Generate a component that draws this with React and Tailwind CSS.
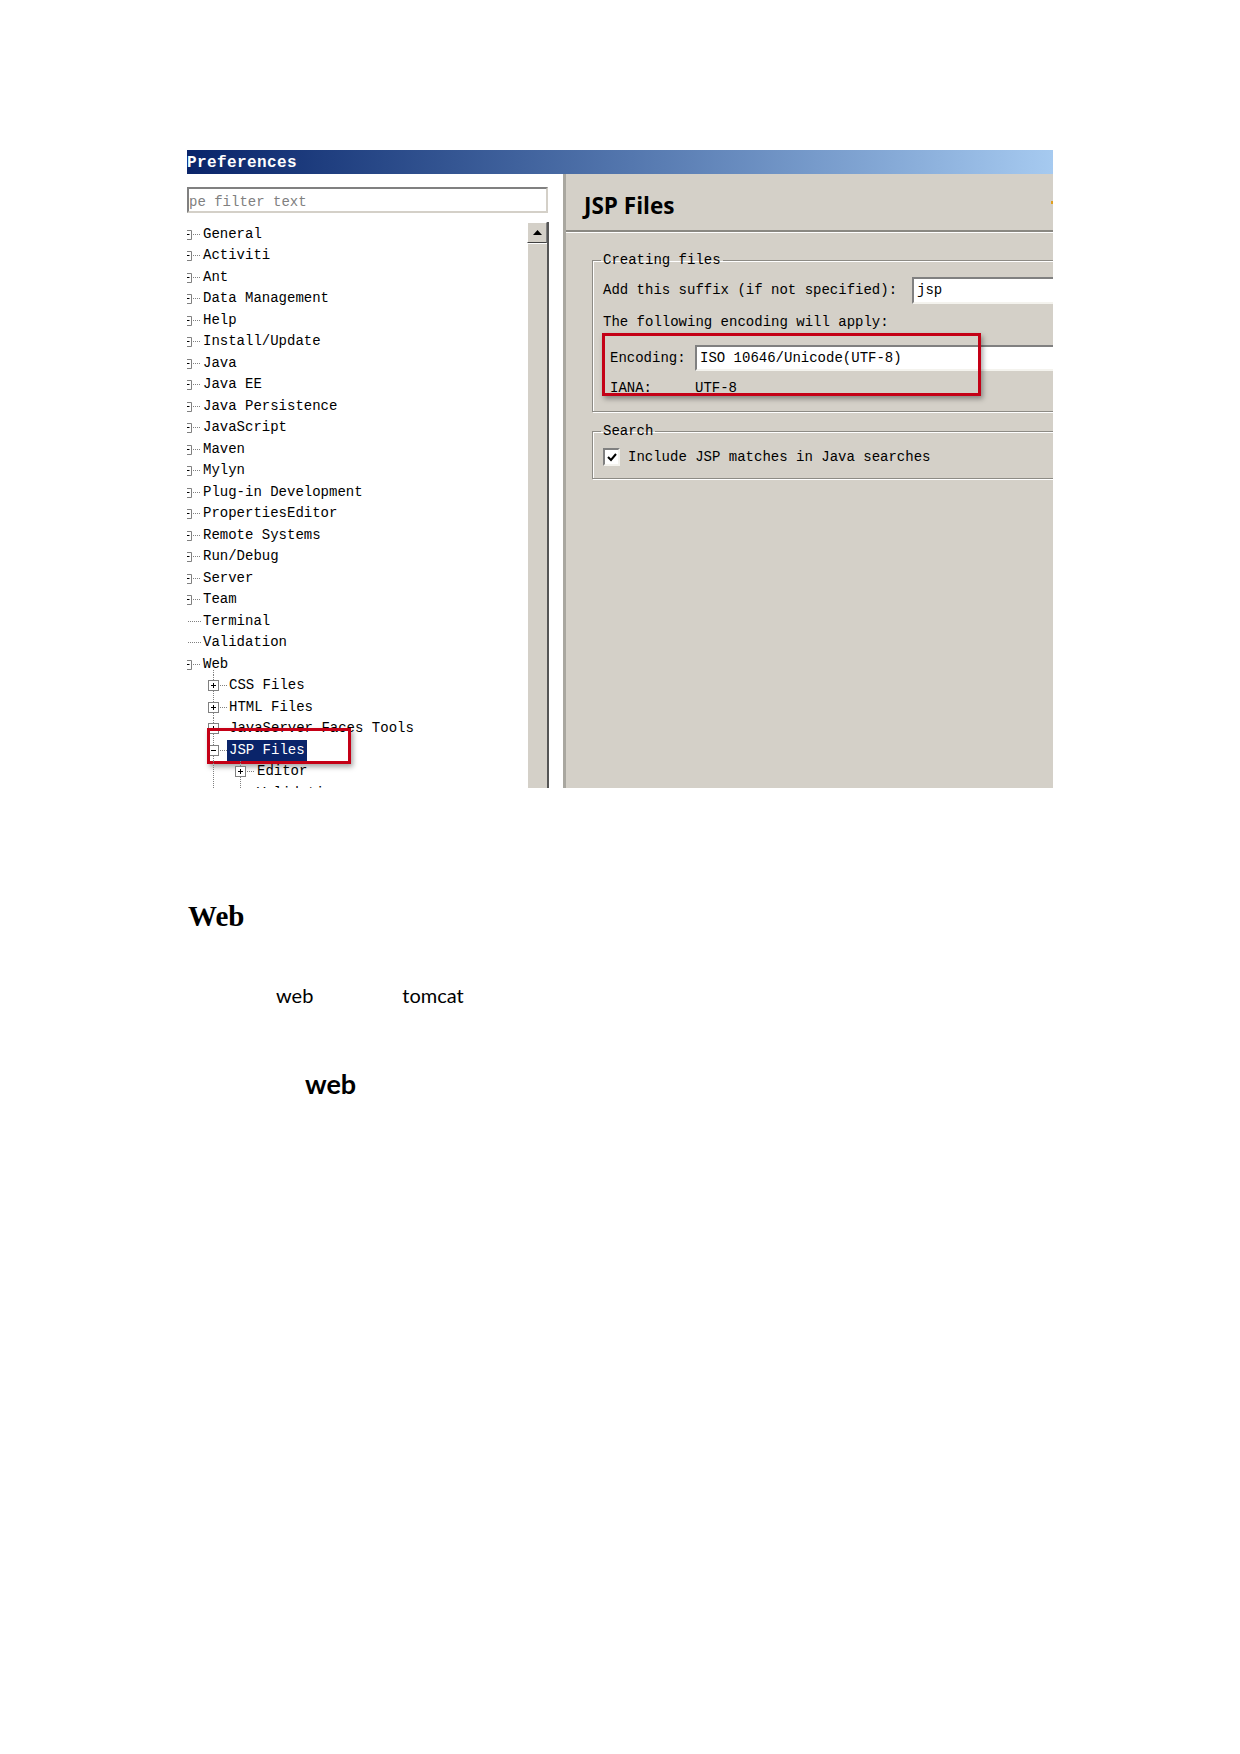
import React from "react";

const mono = "font-['Liberation_Mono','DejaVu_Sans_Mono',monospace]";

const topItems = [
  "General",
  "Activiti",
  "Ant",
  "Data Management",
  "Help",
  "Install/Update",
  "Java",
  "Java EE",
  "Java Persistence",
  "JavaScript",
  "Maven",
  "Mylyn",
  "Plug-in Development",
  "PropertiesEditor",
  "Remote Systems",
  "Run/Debug",
  "Server",
  "Team",
];

const dot = { stroke: "#808080", strokeDasharray: "1 1", fill: "none" };

function TopGlyph({ leaf, open }) {
  return (
    <svg width="14" height="21" className="shrink-0" overflow="visible">
      {!leaf && <path d="M0 6.5H4.5V15.5H0" stroke="#808080" fill="none" />}
      {!leaf && <path d="M0 10.5H2.5" stroke="#000" />}
      <path d={leaf ? "M1 10.5H14" : "M6 10.5H14"} style={dot} />
      {open && <path d="M26.5 16V21.5" style={dot} />}
    </svg>
  );
}

function BoxGlyph({ x, open }) {
  return (
    <>
      <rect x={x + 0.5} y="5.5" width="10" height="10" fill="#fff" stroke="#808080" />
      <path d={`M${x + 3} 10.5H${x + 8}`} stroke="#000" />
      {!open && <path d={`M${x + 5.5} 8V13`} stroke="#000" />}
    </>
  );
}

function ChildGlyph({ open }) {
  return (
    <svg width="40" height="21" className="shrink-0" overflow="visible">
      <path d="M26.5 0V21.5" style={dot} />
      <BoxGlyph x={21} open={open} />
      <path d="M33 10.5H40" style={dot} />
    </svg>
  );
}

function GrandGlyph({ leaf }) {
  return (
    <svg width="68" height="21" className="shrink-0" overflow="visible">
      <path d="M26.5 0V21.5" style={dot} />
      <path d={leaf ? "M53.5 0V10.5H68" : "M53.5 0V21.5"} style={dot} />
      {!leaf && <BoxGlyph x={48} open={false} />}
      {!leaf && <path d="M60 10.5H68" style={dot} />}
    </svg>
  );
}

function Row({ glyph, label, selected, children }) {
  return (
    <div className="relative flex h-[21.5px] items-center">
      {glyph}
      <span
        className={`flex h-[21px] items-center whitespace-nowrap px-[2px] ${
          selected ? "bg-[#0a246a] text-white" : "text-black"
        }`}
      >
        {label}
      </span>
      {children}
    </div>
  );
}

function Inset({ className, children }) {
  return (
    <div
      className={`flex flex-none items-center border-2 border-t-[#808080] border-l-[#808080] border-b-[#f4f3ee] border-r-[#f4f3ee] bg-white pl-[3px] ${className}`}
    >
      {children}
    </div>
  );
}

export default function App() {
  return (
    <div className="min-h-[1754px] w-[1240px] bg-white">
      <div className={`ml-[187px] pt-[150px] w-[866px] text-[14px] ${mono}`}>
        {/* title bar */}
        <div className="flex h-[24px] items-center bg-gradient-to-r from-[#0a246a] to-[#a6caf0] pt-[2px] text-[16px] font-bold tracking-[0.4px] text-white">
          Preferences
        </div>

        <div className="flex h-[614px]">
          {/* left pane */}
          <div className="flex w-[376px] flex-none flex-col overflow-hidden bg-white pt-[13px]">
            <Inset className="h-[26px] w-[361px] !border-b-[#d4d0c8] !border-r-[#d4d0c8] !pl-0 pt-[4px] text-[#808080]">
              pe filter text
            </Inset>
            <div className="mt-[8px] flex min-h-0 flex-1">
              <div className="w-[340px] flex-none pt-[2.5px]">
                {topItems.map((t) => (
                  <Row key={t} glyph={<TopGlyph />} label={t} />
                ))}
                <Row glyph={<TopGlyph leaf />} label="Terminal" />
                <Row glyph={<TopGlyph leaf />} label="Validation" />
                <Row glyph={<TopGlyph open />} label="Web" />
                <Row glyph={<ChildGlyph />} label="CSS Files" />
                <Row glyph={<ChildGlyph />} label="HTML Files" />
                <Row glyph={<ChildGlyph />} label="JavaServer Faces Tools" />
                <Row glyph={<ChildGlyph open />} label="JSP Files" selected>
                  <div className="absolute left-[20px] top-[-12px] h-[36px] w-[144px] border-[3px] border-[#c40016] shadow-[2px_3px_5px_rgba(0,0,0,0.35)]" />
                </Row>
                <Row glyph={<GrandGlyph />} label="Editor" />
                <Row glyph={<GrandGlyph leaf />} label="Validation" />
              </div>
              {/* scrollbar */}
              <div className="mt-[1px] flex w-[22px] flex-none flex-col border-r-2 border-[#555]">
                <div className="flex h-[21px] items-center justify-center border border-t-white border-l-white border-b-[#404040] border-r-[#808080] bg-[#d4d0c8]">
                  <svg width="9" height="5">
                    <path d="M0 5L4.5 0L9 5Z" fill="#000" />
                  </svg>
                </div>
                <div className="flex-1 border-l border-t border-white bg-[#d4d0c8]" />
              </div>
            </div>
          </div>

          {/* right pane */}
          <div className="flex-1 overflow-hidden border-l-[3px] border-[#a9a7a0] bg-[#d4d0c8]">
            <div className="flex h-[58px] items-start justify-between border-b-2 border-b-[#8a8882] pl-[18px] pt-[17px] shadow-[0_1px_0_#fff]">
              <span className="font-['Open_Sans','Liberation_Sans',sans-serif] text-[22.5px] font-bold leading-[30px] text-black">
                JSP Files
              </span>
              <span className="mt-[10px] h-[3px] w-[2px] bg-[#e0a020]" />
            </div>

            <fieldset className="ml-[26px] mt-[19px] w-[520px] border border-[#8d8b85] pb-[13px] pl-[8px] shadow-[inset_1px_1px_0_#fff,1px_1px_0_#fff]">
              <legend className="px-[2px] leading-[18px]">Creating files</legend>
              <div className="mt-[8px] flex h-[27px] items-center pl-[2px]">
                <span className="w-[309px] flex-none whitespace-nowrap">Add this suffix (if not specified):</span>
                <Inset className="h-[27px] w-[220px]">jsp</Inset>
              </div>
              <div className="mt-[8px] flex h-[20px] items-center pl-[2px]">The following encoding will apply:</div>
              <div className="relative mt-[13px] pl-[9px]">
                <div className="flex h-[26px] items-center">
                  <span className="w-[85px] flex-none">Encoding:</span>
                  <Inset className="h-[26px] w-[400px]">ISO 10646/Unicode(UTF-8)</Inset>
                </div>
                <div className="mt-[7px] flex h-[20px] items-center">
                  <span className="w-[85px] flex-none">IANA:</span>
                  <span>UTF-8</span>
                </div>
                <div className="absolute left-[1px] top-[-12px] h-[63px] w-[379px] border-[3px] border-[#c40016] shadow-[2px_3px_5px_rgba(0,0,0,0.35)]" />
              </div>
            </fieldset>

            <fieldset className="ml-[26px] mt-[10px] w-[520px] border border-[#8d8b85] pb-[12px] pl-[8px] shadow-[inset_1px_1px_0_#fff,1px_1px_0_#fff]">
              <legend className="px-[2px] leading-[18px]">Search</legend>
              <div className="mt-[8px] flex h-[18px] items-center gap-[8px] pl-[2px]">
                <div className="flex h-[18px] w-[17px] flex-none items-center justify-center border-2 border-t-[#808080] border-l-[#808080] border-b-[#f4f3ee] border-r-[#f4f3ee] bg-white">
                  <svg width="10" height="9">
                    <path d="M1 4L4 7L9 1" stroke="#000" strokeWidth="2" fill="none" />
                  </svg>
                </div>
                <span>Include JSP matches in Java searches</span>
              </div>
            </fieldset>
          </div>
        </div>
      </div>

      {/* document text */}
      <div className="ml-[188px] mt-[110px] h-[36px] font-['Liberation_Serif',serif] text-[29px] font-bold leading-[36px] text-black">
        Web
      </div>
      <div className="mt-[47px] flex h-[28px] items-center pl-[276px] font-['Lato','Open_Sans',sans-serif] text-[20px] leading-[28px] text-black">
        <span>web</span>
        <span className="ml-[89px]">tomcat</span>
      </div>
      <div className="mt-[57px] h-[36px] pl-[305px] font-['Lato','Open_Sans',sans-serif] text-[27px] font-bold leading-[36px] text-black">
        web
      </div>
    </div>
  );
}
